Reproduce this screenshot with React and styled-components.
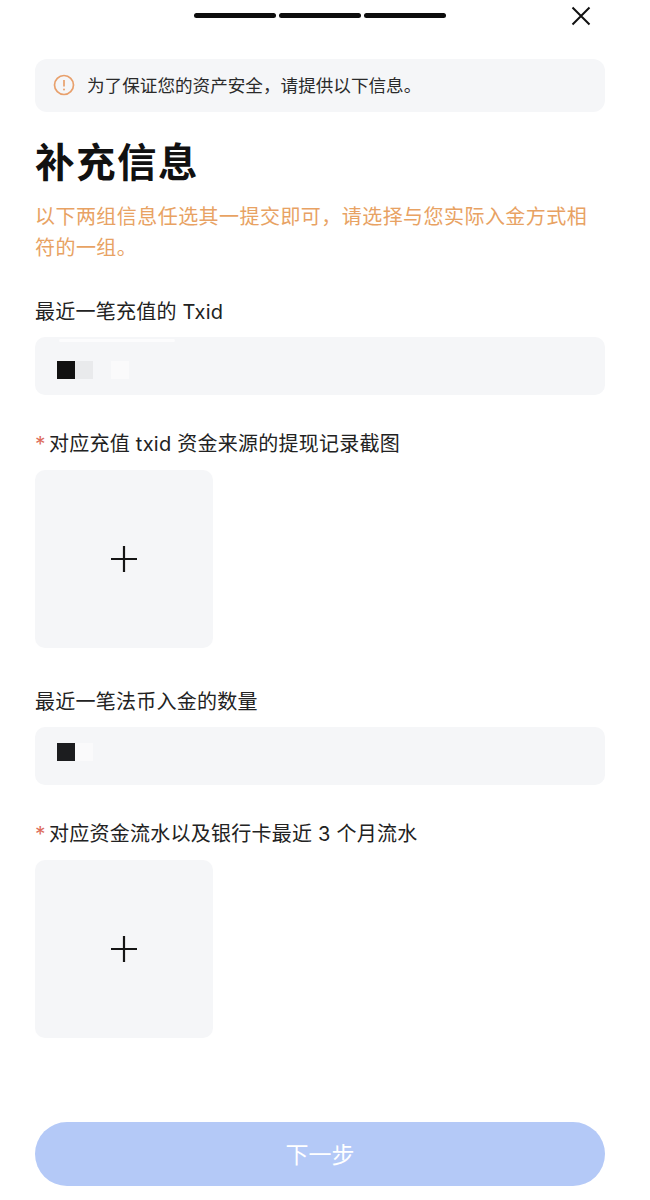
import React from "react";
import styled, { createGlobalStyle } from "styled-components";

const Global = createGlobalStyle`
  html, body { margin: 0; padding: 0; background: #fff; }
  body { font-family: "Inter", "Noto Sans CJK SC", sans-serif; }
`;
const Page = styled.div`
  width: 650px; height: 1200px; box-sizing: border-box; background: #fff;
  padding: 0 45px 14px 35px; display: flex; flex-direction: column; overflow: hidden;
`;
const TopBar = styled.div`
  height: 59px; flex: none; display: flex; justify-content: center; position: relative; padding: 13px 1px 0 0; box-sizing: border-box;
`;
const Steps = styled.div`display: flex; gap: 3px; height: 5px;`;
const Step = styled.span`width: 82px; height: 5px; border-radius: 3px; background: #0d0d0d;`;
const Close = styled.svg`position: absolute; right: 13px; top: 5px; width: 22px; height: 22px;`;
const Notice = styled.div`
  height: 53px; flex: none; background: #f5f6f8; border-radius: 12px; display: flex; align-items: center; gap: 12px; padding: 0 0 2px 18px; box-sizing: border-box;
  font-size: 17.6px; color: #2a2a2a;
`;
const Title = styled.h1`
  margin: 19px 0 0; font: 700 39.5px/58px "Noto Sans CJK SC", sans-serif; color: #111; letter-spacing: 1.5px;
`;
const Hint = styled.p`
  margin: 13px 0 0; font-size: 20px; line-height: 31px; color: #e8a263; letter-spacing: .45px;
`;
const Label = styled.div`
  margin-top: ${p => p.$top}px; font-size: 20px; line-height: 28px; color: #222; display: flex; align-items: center; white-space: pre; letter-spacing: .25px;
`;
const Star = styled.span`color: #dd6d5c; width: 14px; flex: none; font-size: 21px; line-height: 28px; padding-top: 3px; box-sizing: border-box;`;
const Field = styled.div`
  height: 58px; flex: none; margin-top: 11px; border-radius: 10px; background: #f5f6f8; display: flex; align-items: center; padding: ${p => p.$shift > 0 ? `${p.$shift}px 0 0 22px` : `0 0 ${-p.$shift}px 22px`}; box-sizing: border-box; position: relative;
`;
const Glint = styled.span`
  position: absolute; left: 24px; top: 2px; width: 116px; height: 3px; border-radius: 2px; background: #fcfcfd;
`;
const Pixel = styled.span`width: 18px; height: 18px; flex: none; background: ${p => p.$c};`;
const Upload = styled.div`
  width: 178px; height: 178px; flex: none; margin-top: 11px; border-radius: 10px; background: #f5f6f8; display: flex; align-items: center; justify-content: center;
`;
const Submit = styled.button`
  margin-top: auto; height: 64px; flex: none; border: 0; border-radius: 32px; background: #b4c9f7; color: #fff; padding: 0 0 3px; font: 400 23px "Noto Sans CJK SC", sans-serif; letter-spacing: 0;
`;
const Plus = () => (
  <svg width="28" height="28" viewBox="0 0 28 28"><path d="M14 1v26M1 14h26" stroke="#151515" strokeWidth="2.2" fill="none" /></svg>
);

export default function App() {
  return (
    <Page>
      <Global />
      <TopBar>
        <Steps><Step /><Step /><Step /></Steps>
        <Close viewBox="0 0 22 22"><path d="M2.5 2.5l17 17M19.5 2.5l-17 17" stroke="#111" strokeWidth="2" fill="none" /></Close>
      </TopBar>
      <Notice>
        <svg width="22" height="22" viewBox="0 0 22 22" fill="none"><circle cx="11" cy="11" r="9.5" stroke="#e8a06c" strokeWidth="1.7" /><path d="M11 6v6.5" stroke="#e8a06c" strokeWidth="1.7" /><circle cx="11" cy="15.4" r="1" fill="#e8a06c" /></svg>
        <span>为了保证您的资产安全，请提供以下信息。</span>
      </Notice>
      <Title>补充信息</Title>
      <Hint>以下两组信息任选其一提交即可，请选择与您实际入金方式相符的一组。</Hint>
      <Label $top={34}>最近一笔充值的 Txid</Label>
      <Field $shift={7}><Glint /><Pixel $c="#111" /><Pixel $c="#e9eaec" /><Pixel $c="#f5f6f8" /><Pixel $c="#fafafb" /></Field>
      <Label $top={33}><Star>*</Star>对应充值 txid 资金来源的提现记录截图</Label>
      <Upload><Plus /></Upload>
      <Label $top={40}>最近一笔法币入金的数量</Label>
      <Field $shift={-8}><Pixel $c="#1c1d1f" /><Pixel $c="#fafafb" /></Field>
      <Label $top={33}><Star>*</Star>对应资金流水以及银行卡最近 3 个月流水</Label>
      <Upload><Plus /></Upload>
      <Submit>下一步</Submit>
    </Page>
  );
}
